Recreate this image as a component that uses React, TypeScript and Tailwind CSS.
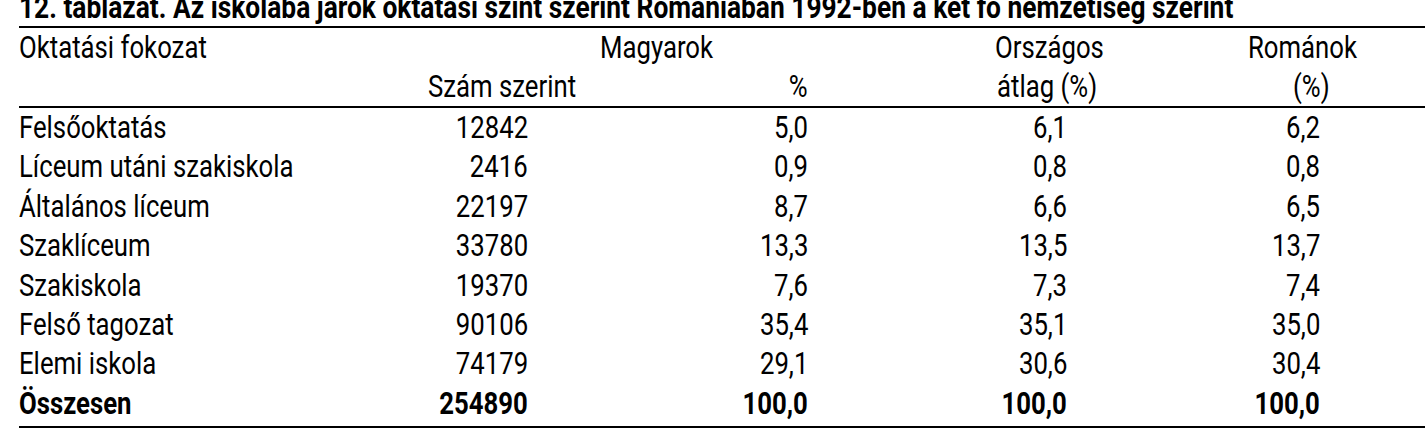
import React from 'react';

const rows: [string, string, string, string, string][] = [
  ['Felsőoktatás', '12842', '5,0', '6,1', '6,2'],
  ['Líceum utáni szakiskola', '2416', '0,9', '0,8', '0,8'],
  ['Általános líceum', '22197', '8,7', '6,6', '6,5'],
  ['Szaklíceum', '33780', '13,3', '13,5', '13,7'],
  ['Szakiskola', '19370', '7,6', '7,3', '7,4'],
  ['Felső tagozat', '90106', '35,4', '35,1', '35,0'],
  ['Elemi iskola', '74179', '29,1', '30,6', '30,4'],
];

const cols = 'grid grid-cols-[311px_198px_280px_259px_253px_1fr] whitespace-nowrap';

// the reference uses a narrow sans, so squeeze the glyphs
const L = ({ children }: { children: React.ReactNode }) => (
  <span className="inline-block scale-x-[0.83] origin-left">{children}</span>
);
const R = ({ children }: { children: React.ReactNode }) => (
  <span className="inline-block scale-x-[0.83] origin-right">{children}</span>
);

const App: React.FC = () => {
  return (
    <div
      className="bg-white text-black pl-[19px] h-[428px] overflow-hidden text-[31px] font-normal"
      style={{ fontFamily: 'Roboto, "Liberation Sans", Arial, sans-serif' }}
    >
      <div className="font-bold leading-[36px] mt-[-10px] whitespace-nowrap">
        <span className="inline-block scale-x-[0.85] origin-left">
          12. táblázat. Az iskolába járók oktatási szint szerint Romániában 1992-ben a két fő nemzetiség szerint
        </span>
      </div>

      <div className="border-t-2 border-b-2 border-black">
        {/* header */}
        <div className={`${cols} leading-[39px]`}>
          <div><L>Oktatási fokozat</L></div>
          <div />
          <div className="pl-[72px]"><L>Magyarok</L></div>
          <div className="pl-[187px]"><L>Országos</L></div>
          <div className="pl-[181px]"><L>Románok</L></div>
          <div />
        </div>
        <div className={`${cols} leading-[39px] border-b-2 border-black`}>
          <div />
          <div className="pl-[98px]"><L>Szám szerint</L></div>
          <div className="text-right"><R>%</R></div>
          <div className="pl-[189px]"><L>átlag (%)</L></div>
          <div className="pl-[226px]"><L>(%)</L></div>
          <div />
        </div>

        {/* body */}
        <div className="pb-[3px]">
          {rows.map((r) => (
            <div key={r[0]} className={`${cols} leading-[39.4px]`}>
              <div><L>{r[0]}</L></div>
              <div className="text-right"><R>{r[1]}</R></div>
              <div className="text-right"><R>{r[2]}</R></div>
              <div className="text-right"><R>{r[3]}</R></div>
              <div className="text-right"><R>{r[4]}</R></div>
              <div />
            </div>
          ))}
          <div className={`${cols} leading-[39.4px] font-bold`}>
            <div><L>Összesen</L></div>
            <div className="text-right"><R>254890</R></div>
            <div className="text-right"><R>100,0</R></div>
            <div className="text-right"><R>100,0</R></div>
            <div className="text-right"><R>100,0</R></div>
            <div />
          </div>
        </div>
      </div>
    </div>
  );
};

export default App;
